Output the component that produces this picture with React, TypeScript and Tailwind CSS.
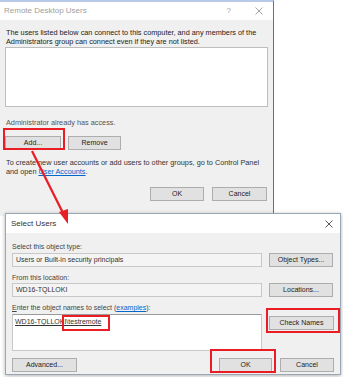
const font = { fontFamily: '"Liberation Sans", Arial, sans-serif' };

const Btn = ({ label, className = '' }: { label: string; className?: string }) => (
  <div
    className={`flex items-center justify-center h-[14px] bg-[#e1e1e1] border border-[#adadad] text-[7px] text-[#222] ${className}`}
  >
    {label}
  </div>
);

const Field = ({ value }: { value: string }) => (
  <div className="flex items-center h-[14px] w-[250px] border border-[#c8c8c8] bg-[#f4f4f4] px-[3px] text-[7px] text-[#333]">
    {value}
  </div>
);

export default function App() {
  return (
    <div className="relative w-[343px] h-[377px] bg-white overflow-hidden" style={font}>
      {/* Remote Desktop Users */}
      <div className="absolute left-0 top-0 w-[274px] h-[216px] flex flex-col bg-[#f0f0f0] border-t-2 border-t-[#b7c9e6] border-r border-r-[#6f6f6f]">
        <div className="flex items-center justify-between h-[18px] bg-white pl-[4px] pr-[10px]">
          <span className="text-[8px] text-[#a0a0a0]">Remote Desktop Users</span>
          <div className="flex items-center gap-[24px] text-[#9a9a9a]">
            <span className="text-[8px]">?</span>
            <svg width="8" height="8" viewBox="0 0 8 8" stroke="#9a9a9a" strokeWidth="0.9">
              <path d="M0.5 0.5L7.5 7.5M7.5 0.5L0.5 7.5" />
            </svg>
          </div>
        </div>
        <div className="flex flex-col px-[5px] pt-[8px]">
          <p className="text-[7.3px] leading-[9px] text-[#222] pl-[1px]">
            The users listed below can connect to this computer, and any members of the
            <br />
            Administrators group can connect even if they are not listed.
          </p>
          <div className="mt-[1px] h-[60px] w-[263px] bg-white border border-[#bdbdbd]" />
          <p className="mt-[11px] text-[7.3px] leading-[9px] text-[#555] pl-[1px]">
            Administrator already has access.
          </p>
          <div className="mt-[9px] flex gap-[7px]">
            <Btn label="Add..." className="w-[56px]" />
            <Btn label="Remove" className="w-[53px]" />
          </div>
          <p className="mt-[8px] text-[7.3px] leading-[9px] text-[#333] pl-[1px]">
            To create new user accounts or add users to other groups, go to Control Panel
            <br />
            and open <span className="text-[#0066cc] underline">User Accounts</span>.
          </p>
          <div className="mt-[11px] flex justify-end gap-[8px] pr-[1px]">
            <Btn label="OK" className="w-[54px]" />
            <Btn label="Cancel" className="w-[55px]" />
          </div>
        </div>
      </div>

      {/* Select Users */}
      <div className="absolute left-[5px] top-[213px] w-[336px] h-[162px] flex flex-col bg-[#f0f0f0] border border-[#9aa6b4] shadow-[0_1px_4px_rgba(0,0,0,0.3)]">
        <div className="flex items-center justify-between h-[19px] bg-white pl-[5px] pr-[7px]">
          <span className="text-[8px] text-[#333]">Select Users</span>
          <svg width="8" height="8" viewBox="0 0 8 8" stroke="#444" strokeWidth="0.9">
            <path d="M0.5 0.5L7.5 7.5M7.5 0.5L0.5 7.5" />
          </svg>
        </div>
        <div className="flex flex-col pl-[6px] pr-[6px] pt-[9px]">
          <p className="text-[7px] leading-[9px] text-[#444]">Select this object type:</p>
          <div className="mt-[2px] flex items-center gap-[7px]">
            <Field value="Users or Built-in security principals" />
            <Btn label="Object Types..." className="w-[64px]" />
          </div>
          <p className="mt-[6px] text-[7px] leading-[9px] text-[#444]">From this location:</p>
          <div className="mt-[1px] flex items-center gap-[7px]">
            <Field value="WD16-TQLLOKI" />
            <Btn label="Locations..." className="w-[64px]" />
          </div>
          <p className="mt-[6px] text-[7px] leading-[9px] text-[#444]">
            <span className="underline">E</span>nter the object names to select (
            <span className="text-[#0066cc] underline">examples</span>):
          </p>
          <div className="mt-[2px] flex items-start gap-[7px]">
            <div className="h-[37px] w-[250px] bg-white border border-[#c8c8c8] border-t-[#9a9a9a] px-[2px] pt-[2px] text-[7px] leading-[9px] text-[#333]">
              <span className="underline">WD16-TQLLOKI\testremote</span>
            </div>
            <Btn label="Check Names" className="mt-[2px] w-[65px]" />
          </div>
          <div className="mt-[7px] flex items-center">
            <Btn label="Advanced..." className="w-[65px]" />
            <div className="ml-auto flex gap-[8px]">
              <Btn label="OK" className="w-[53px] border-[#0078d7]" />
              <Btn label="Cancel" className="w-[54px]" />
            </div>
          </div>
        </div>
      </div>

      {/* annotations */}
      <div className="absolute left-[3px] top-[128px] w-[62px] h-[22px] border-2 border-[#ea1c24]" />
      <div className="absolute left-[62px] top-[315px] w-[48px] h-[16px] border-2 border-[#ea1c24]" />
      <div className="absolute left-[266px] top-[308px] w-[74px] h-[25px] border-2 border-[#ea1c24]" />
      <div className="absolute left-[210px] top-[349px] w-[66px] h-[24px] border-2 border-[#ea1c24]" />
      <svg className="absolute left-0 top-0" width="343" height="377" viewBox="0 0 343 377">
        <line x1="32" y1="151" x2="64" y2="215" stroke="#ea1c24" strokeWidth="2.2" />
        <path d="M68 224 L59 212 L68 209 Z" fill="#ea1c24" />
      </svg>
    </div>
  );
}
